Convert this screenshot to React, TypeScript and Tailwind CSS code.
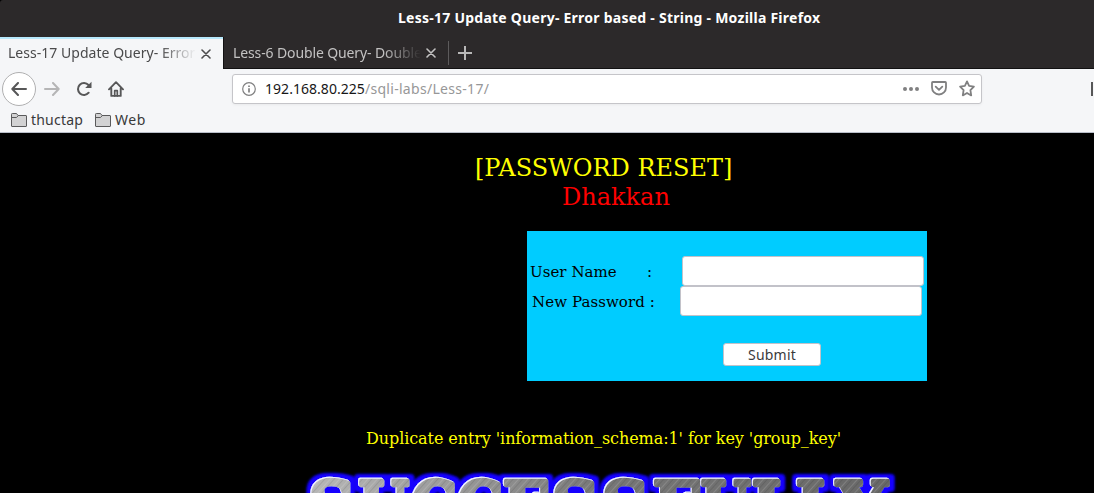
import React from "react";

const bannerLetters = [
  { ch: "S", x: 309, w: 46 },
  { ch: "U", x: 359, w: 50 },
  { ch: "C", x: 411, w: 46 },
  { ch: "C", x: 457, w: 46 },
  { ch: "E", x: 503, w: 47 },
  { ch: "S", x: 552, w: 47 },
  { ch: "S", x: 602, w: 47 },
  { ch: "F", x: 653, w: 46 },
  { ch: "U", x: 701, w: 50 },
  { ch: "L", x: 752, w: 44 },
  { ch: "L", x: 796, w: 44 },
  { ch: "Y", x: 837, w: 50 },
];

function Banner() {
  return (
    <svg className="block h-[35px] w-[1094px] shrink-0" viewBox="0 0 1094 35">
      <defs>
        <filter id="metal" filterUnits="userSpaceOnUse" x="290" y="0" width="620" height="90">
          <feMorphology in="SourceAlpha" operator="dilate" radius="3.6" />
          <feGaussianBlur stdDeviation="1.8" result="halo" />
          <feFlood floodColor="#1800ff" />
          <feComposite in2="halo" operator="in" result="glow" />
          <feOffset in="SourceAlpha" dx="-0.6" dy="-1" result="lifted" />
          <feFlood floodColor="#f2f2ff" />
          <feComposite in2="lifted" operator="in" result="edge" />
          <feMerge>
            <feMergeNode in="glow" />
            <feMergeNode in="glow" />
            <feMergeNode in="edge" />
            <feMergeNode in="SourceGraphic" />
          </feMerge>
        </filter>
        <linearGradient id="steel" gradientUnits="userSpaceOnUse" x1="305" y1="0" x2="893" y2="0">
          <stop offset="0" stopColor="#b8b8b8" />
          <stop offset="0.28" stopColor="#969696" />
          <stop offset="0.5" stopColor="#777" />
          <stop offset="1" stopColor="#686868" />
        </linearGradient>
        <pattern id="lines" width="7" height="7" patternUnits="userSpaceOnUse" patternTransform="rotate(42)">
          <rect width="1" height="7" fill="#fff" opacity="0.14" />
          <rect x="3" width="1" height="7" fill="#000" opacity="0.1" />
        </pattern>
        <pattern id="brushed" width="1094" height="100" patternUnits="userSpaceOnUse">
          <rect width="1094" height="100" fill="url(#steel)" />
          <rect width="1094" height="100" fill="url(#lines)" />
        </pattern>
      </defs>
      <g
        filter="url(#metal)"
        fill="url(#brushed)"
        stroke="url(#brushed)"
        strokeWidth="4.4"
        strokeLinejoin="round"
        fontFamily="DejaVu Serif, serif"
        fontWeight="bold"
        fontSize="68"
      >
        {bannerLetters.map((l, i) => (
          <text key={i} x={l.x} y="72" textLength={l.w} lengthAdjust="spacingAndGlyphs">
            {l.ch}
          </text>
        ))}
      </g>
    </svg>
  );
}

function CloseIcon({ color }: { color: string }) {
  return (
    <svg width="10" height="10" viewBox="0 0 10 10" stroke={color} strokeWidth="1.6" strokeLinecap="round">
      <path d="M1 1l8 8M9 1l-8 8" />
    </svg>
  );
}

function FolderIcon() {
  return (
    <svg className="shrink-0" width="16" height="14" viewBox="0 0 16 14" fill="#d2d2d3" stroke="#5a5a5b">
      <path d="M.5 13V1.3Q.5.5 1.3.5h4.2L7 2.5h8q.5 0 .5.5v10q0 .5-.5.5H1q-.5 0-.5-.5z" />
      <path d="M.5 4.5h5L7.3 2.6" fill="none" />
    </svg>
  );
}

export default function App() {
  return (
    <div className="flex h-[493px] w-[1094px] flex-col overflow-hidden bg-black font-['Noto_Sans',sans-serif]">
      <header className="flex h-[37px] shrink-0 items-center rounded-tl-[3px] bg-[#2c292a] pb-px pl-[398px]">
        <h1 className="whitespace-nowrap text-[14px] leading-5 font-bold tracking-[0.25px] text-white">
          Less-17 Update Query- Error based - String - Mozilla Firefox
        </h1>
      </header>

      <div className="flex h-8 shrink-0 bg-[#2c292a]">
        <div className="flex w-[223px] items-center border-t-2 border-[#b7e8fb] bg-[#f5f6f8] pb-px pl-2 text-[#4a4a4b]">
          <div className="-mt-[2px] w-[188px] overflow-hidden whitespace-nowrap text-[14px] leading-5 tracking-[0.03px] [mask-image:linear-gradient(to_right,black_152px,transparent_188px)]">
            Less-17 Update Query- Error
          </div>
          <div className="ml-[5px]"><CloseIcon color="#4d4d4e" /></div>
        </div>
        <div className="flex grow items-center border-b border-l border-[#121112] pl-[9px] text-[#c3c2c2]">
          <div className="w-[188px] overflow-hidden whitespace-nowrap text-[14px] leading-5 tracking-[-0.12px] [mask-image:linear-gradient(to_right,black_150px,transparent_188px)]">
            Less-6 Double Query- Double
          </div>
          <div className="ml-[5px]"><CloseIcon color="#c3c2c2" /></div>
          <div className="ml-3 h-6 w-px bg-[#5d5b5c]" />
          <svg className="ml-[9px]" width="14" height="14" viewBox="0 0 14 14" stroke="#b9b8b8" strokeWidth="2">
            <path d="M7 0v14M0 7h14" />
          </svg>
        </div>
      </div>

      <nav className="flex h-[39px] shrink-0 items-center bg-[#f5f6f8] pl-[2px] text-[#575758]">
        <div className="flex h-[34px] w-[34px] items-center justify-center rounded-full border border-[#b0b0b1] bg-white">
          <svg width="16" height="14" viewBox="0 0 16 14" fill="none" stroke="currentColor" strokeWidth="2" strokeLinecap="round" strokeLinejoin="round">
            <path d="M15 7H1.5M7 1L1.3 7 7 13" />
          </svg>
        </div>
        <svg className="ml-2" width="16" height="14" viewBox="0 0 16 14" fill="none" stroke="#b5b5b6" strokeWidth="2" strokeLinecap="round" strokeLinejoin="round">
          <path d="M1 7h13.5M9 1l5.7 6L9 13" />
        </svg>
        <svg className="ml-4" width="16" height="16" viewBox="0 0 16 16" fill="none" stroke="currentColor" strokeWidth="2">
          <path d="M12.7 11.7A6 6 0 1 1 12.5 4" strokeLinecap="round" />
          <path d="M15.5.8v6.3H9.2z" fill="currentColor" stroke="none" />
        </svg>
        <svg className="ml-4" width="16" height="16" viewBox="0 0 16 16" fill="none" stroke="currentColor" strokeWidth="1.9" strokeLinecap="round" strokeLinejoin="round">
          <path d="M1 8.3L8 1.2l7 7.1M3.3 7.5v7.4h9.4V7.5" />
          <path d="M6.7 15V9.7h2.6V15" strokeWidth="1.7" />
        </svg>
        <div className="ml-[108px] flex h-[30px] w-[750px] items-center rounded-[3px] border border-[#c5c5c9] bg-white pl-[9px] text-[#808081] shadow-[0_1px_3px_rgba(0,0,0,0.05)]">
          <svg width="14" height="14" viewBox="0 0 14 14" fill="none" stroke="currentColor" strokeWidth="1.2">
            <circle cx="7" cy="7" r="6.3" />
            <path d="M7 6.2v4.3M7 3.4v1.6" strokeWidth="1.7" />
          </svg>
          <div className="mt-px ml-[9px] w-[638px] whitespace-nowrap text-[14px] leading-5 tracking-[0.3px] text-[#979798]">
            <span className="tracking-[0.04px] text-[#171718]">192.168.80.225</span>/sqli-labs/Less-17/
          </div>
          <svg width="16" height="4" viewBox="0 0 16 4" fill="currentColor">
            <circle cx="2" cy="2" r="2" /><circle cx="8" cy="2" r="2" /><circle cx="14" cy="2" r="2" />
          </svg>
          <svg className="ml-3" width="16" height="15" viewBox="0 0 16 15" fill="none" stroke="currentColor" strokeWidth="1.8" strokeLinecap="round" strokeLinejoin="round">
            <path d="M1.8 1h12.4q.8 0 .8.8v4.7a7 7 0 0 1-14 0V1.8Q1 1 1.8 1z" />
            <path d="M4.7 5.6L8 8.8l3.3-3.2" />
          </svg>
          <svg className="ml-3" width="16" height="17" viewBox="0 0 16 17" fill="none" stroke="currentColor" strokeWidth="1.8" strokeLinejoin="round">
            <path d="M8 1.4l2.1 4.5 4.8.7-3.5 3.5.8 5.3L8 12.9l-4.2 2.5.8-5.3L1.1 6.6l4.8-.7z" />
          </svg>
        </div>
        <div className="ml-[109px] h-[14px] w-[2px] shrink-0 bg-[#575758]" />
      </nav>

      <div className="flex h-[25px] shrink-0 items-center border-b border-[#b9bec9] bg-[#f5f6f8] pl-[11px] text-[14px] leading-5 text-[#39393a]">
        <FolderIcon />
        <span className="ml-1 w-[64px] tracking-[0.2px]">thuctap</span>
        <FolderIcon />
        <span className="ml-1 tracking-[0.5px]">Web</span>
      </div>

      <main className="flex h-[360px] shrink-0 flex-col font-['DejaVu_Serif',serif]">
        <div className="mt-[21px] ml-[475px] whitespace-pre text-[24px] leading-[29px] text-[#ffff00]">
          [PASSWORD RESET]
          <div className="pl-[87px] text-[#ff0000]">Dhakkan</div>
        </div>
        <form className="mt-[19px] ml-[527px] flex h-[150px] w-[400px] shrink-0 flex-col bg-[#00ccff] pt-[25px] text-[15px] text-black" onSubmit={(e) => e.preventDefault()}>
          <div className="flex h-[30px] items-center pl-[3px]">
            <label className="w-[117px] pt-[2px] whitespace-nowrap tracking-[0.05px]" htmlFor="uname">User Name</label>
            <span className="w-[35px] pt-[2px]">:</span>
            <input id="uname" className="h-[30px] w-[242px] rounded-[3px] border border-[#c2c2c9] bg-white px-2" />
          </div>
          <div className="flex h-[30px] items-center pl-[5px]">
            <label className="w-[148px] pt-[2px] whitespace-nowrap tracking-[0.07px]" htmlFor="passwd">New Password :</label>
            <input id="passwd" type="password" className="h-[30px] w-[242px] rounded-[3px] border border-[#c2c2c9] bg-white px-2" />
          </div>
          <button className="mt-[27px] ml-[196px] h-[23px] w-[98px] rounded-[3px] border border-[#c2c2c9] bg-white font-['Noto_Sans',sans-serif] text-[14px] leading-[21px] tracking-[0.2px] text-[#3a3a3b]">
            Submit
          </button>
        </form>
        <p className="mt-12 ml-[366px] whitespace-nowrap text-[16px] leading-5 tracking-[-0.08px] text-[#ffff00]">
          Duplicate entry 'information_schema:1' for key 'group_key'
        </p>
        <div className="mt-[9px]"><Banner /></div>
      </main>
    </div>
  );
}
